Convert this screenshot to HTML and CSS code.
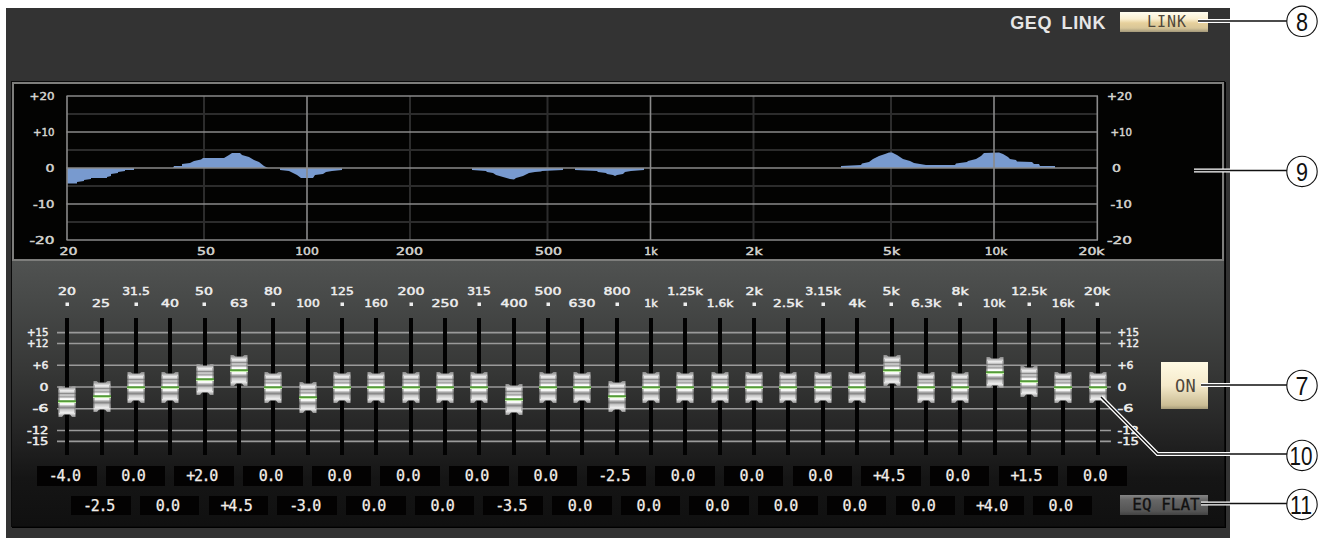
FILE: index.html
```
<!DOCTYPE html>
<html>
<head>
  <meta charset="utf-8">
  <meta name="viewport" content="width=device-width, initial-scale=1"/>
  <title>Graphic EQ</title>
  <link rel="stylesheet" href="styles.css">
</head>
<body>
  <main>
    <div class="panel">
      <header>
        <h1>GEQ LINK</h1>
        <button class="btn link">LINK</button>
      </header>
      <div class="eq">
        <div class="graph">
          <svg id="graph" viewBox="14 84 1208 175" width="1208" height="175"></svg>
        </div>
        <div class="bank">
          <svg id="scale" class="scale" viewBox="12 261 1140 200" width="1140" height="200"></svg>
          <div class="channels">
            <div id="faders" class="faders"></div>
            <div id="values_even" class="values"></div>
            <div id="values_odd" class="values odd"></div>
          </div>
          <div class="side">
            <button class="btn on">ON</button>
            <button class="btn flat">EQ FLAT</button>
          </div>
        </div>
      </div>
    </div>
    <svg class="callouts" viewBox="0 0 1329 545" width="1329" height="545">
      <defs>
        <linearGradient id="metal" x1="0" y1="0" x2="0" y2="1">
          <stop offset="0" stop-color="#8d8d8d"/>
          <stop offset=".06" stop-color="#a5a5a5"/>
          <stop offset=".15" stop-color="#efefef"/>
          <stop offset=".2" stop-color="#d5d5d5"/>
          <stop offset=".24" stop-color="#8a8a8a"/>
          <stop offset=".29" stop-color="#d8d8d8"/>
          <stop offset=".35" stop-color="#9c9c9c"/>
          <stop offset=".41" stop-color="#fff"/>
          <stop offset=".6" stop-color="#f6f6f6"/>
          <stop offset=".64" stop-color="#b5b5b5"/>
          <stop offset=".7" stop-color="#858585"/>
          <stop offset=".76" stop-color="#c8c8c8"/>
          <stop offset=".87" stop-color="#f0f0f0"/>
          <stop offset="1" stop-color="#8e8e8e"/>
        </linearGradient>
      </defs>
      <g class="halo">
        <path d="M1198 21H1230M1194 170.5H1230M1201 385H1230M1101 397L1157.5 454H1230M1201 503.5H1230"/>
      </g>
      <g class="leader">
        <path d="M1198 21H1287M1194 170.5H1287M1201 385H1287M1101 397L1157.5 454H1287M1201 503.5H1287"/>
      </g>
      <g class="number">
        <circle cx="1302" cy="21.3" r="15.2"/>
        <circle cx="1302" cy="171.4" r="15.2"/>
        <circle cx="1302" cy="385.4" r="15.2"/>
        <circle cx="1302" cy="455.4" r="15.2"/>
        <circle cx="1302" cy="504.4" r="15.2"/>
        <text x="1302" y="30.8" textLength="12" lengthAdjust="spacingAndGlyphs">8</text>
        <text x="1302" y="180.9" textLength="12" lengthAdjust="spacingAndGlyphs">9</text>
        <text x="1302" y="394.9" textLength="13" lengthAdjust="spacingAndGlyphs">7</text>
        <text x="1301" y="464.9" textLength="23" lengthAdjust="spacingAndGlyphs">10</text>
        <text x="1301" y="513.9" textLength="22" lengthAdjust="spacingAndGlyphs">11</text>
      </g>
    </svg>
  </main>
  <script src="geq.js"></script>
</body>
</html>
```
FILE: styles.css
```
html,
body {
  margin: 0;
  padding: 0;
  background: #fff;
}
main {
  position: relative;
  width: 1329px;
  height: 545px;
  overflow: hidden;
  font-family: "DejaVu Sans", sans-serif;
}
svg {
  display: block;
}
.panel {
  width: 1224px;
  height: 530px;
  margin: 8px 0 0 6px;
  background: #333;
  display: flex;
  flex-direction: column;
}
header {
  display: flex;
  justify-content: flex-end;
  align-items: flex-start;
  gap: 14px;
  height: 69px;
  padding: 4px 22px 0 0;
}
h1 {
  margin: 1px 0 0;
  font: bold 18px/20px "Liberation Sans", sans-serif;
  letter-spacing: .6px;
  word-spacing: 4px;
  color: #e6e6e6;
}

.btn {
  border: 0;
  padding: 0;
  font-family: "DejaVu Sans Mono", monospace;
  color: #4f473b;
}
.btn.link {
  width: 88px;
  height: 20px;
  padding-left: 6px;
  font-size: 15px;
  line-height: 20px;
  letter-spacing: 1px;
  background: linear-gradient(#fffdf0 0, #faefd0 35%, #e6d09c 55%, #d8c698 80%, #a3987a 100%);
}
.btn.on {
  width: 47px;
  height: 47px;
  margin: 101px 0 0 auto;
  padding-left: 2px;
  font-size: 17px;
  letter-spacing: .3px;
  background: linear-gradient(#fffae4, #f5eacb 50%, #cbbd95 92%, #a59a78);
}
.btn.flat {
  width: 88px;
  height: 20px;
  margin-top: 86px;
  padding-left: 4px;
  font-size: 16px;
  line-height: 20px;
  letter-spacing: 0;
  color: #111;
  -webkit-text-stroke: .3px #111;
  background: linear-gradient(#858585, #666 25%, #555 80%, #424242);
}

.eq {
  width: 1212px;
  height: 444px;
  margin-left: 5px;
  border: 1px solid #0a0a0a;
  box-shadow: 1px 1px 0 #000;
}
.graph {
  border: 2px solid #7e7e7c;
  background: #030302;
}
.bank {
  display: grid;
  grid-template-columns: 1108px 88px;
  height: 265px;
  background: linear-gradient(#505251 0, #474948 15%, #363736 42%, #242424 65%, #151515 82%, #101010);
}
.scale {
  grid-area: 1 / 1 / 2 / 3;
}
.channels {
  grid-area: 1 / 1 / 2 / 2;
}
.side {
  grid-area: 1 / 2 / 2 / 3;
  display: flex;
  flex-direction: column;
}

/* graph */
.dim {
  stroke: #2c2c2c;
  stroke-width: 2;
}
.grid {
  stroke: #8a8a8a;
  stroke-width: 1.6;
}
.curve {
  fill: #789acf;
}
.tick {
  fill: #d4d4d0;
  font-size: 10px;
  stroke: #d4d4d0;
  stroke-width: .45;
}
.end {
  text-anchor: end;
}
.mid {
  text-anchor: middle;
}
.scale .grid {
  stroke: #9a9a9a;
}
.bank .tick {
  fill: #eee;
  stroke: #eee;
}

/* faders */
.faders {
  display: grid;
  grid-template-columns: repeat(31, 34.355px);
  padding: 23px 0 0 38.1px;
}
.fader svg {
  overflow: visible;
}
.track {
  height: 137px;
  margin-top: 1px;
  display: flex;
  justify-content: center;
  align-items: flex-start;
  background: linear-gradient(#020202, #020202) center / 4px 100% no-repeat;
}
.cap {
  width: 18px;
  height: 31px;
}
.values {
  display: flex;
  gap: 9.2px;
  padding: 11px 0 0 25px;
}
.values.odd {
  padding: 10px 0 0 59.3px;
}
.value {
  flex: none;
  box-sizing: border-box;
  width: 59.5px;
  height: 19.5px;
  padding-right: 5px;
  background: #030202;
  color: #f3eee9;
  font: 15px/20px "DejaVu Sans Mono", monospace;
  letter-spacing: -1.3px;
  text-align: center;
  -webkit-text-stroke: .25px #f3eee9;
}

/* callouts lie over the panel */
.callouts {
  position: absolute;
  left: 0;
  top: 0;
}
.halo {
  fill: none;
  stroke: #fff;
  stroke-width: 4;
}
.leader {
  fill: none;
  stroke: #111;
  stroke-width: 1.4;
}
.number circle {
  fill: #fff;
  stroke: #111;
  stroke-width: 1.1;
}
.number text {
  font: 26px "Liberation Sans", sans-serif;
  fill: #111;
  text-anchor: middle;
}
```
FILE: geq.js
```
(function () {
  'use strict';
  var $ = document.querySelector.bind(document);

  var bands = [
    ['20', -4], ['25', -2.5], ['31.5', 0], ['40', 0], ['50', 2], ['63', 4.5],
    ['80', 0], ['100', -3], ['125', 0], ['160', 0], ['200', 0], ['250', 0],
    ['315', 0], ['400', -3.5], ['500', 0], ['630', 0], ['800', -2.5], ['1k', 0],
    ['1.25k', 0], ['1.6k', 0], ['2k', 0], ['2.5k', 0], ['3.15k', 0], ['4k', 0],
    ['5k', 4.5], ['6.3k', 0], ['8k', 0], ['10k', 4], ['12.5k', 1.5], ['16k', 0], ['20k', 0]
  ];
  var PX_PER_DB = 3.624;

  // wide lettering: the 1 and the point are narrower than the other glyphs
  var advance = { '1': 5.5, '.': 4, '+': 7, '-': 7, 'k': 8 };
  var label = function (x, y, text, cls) {
    var w = text.split('').reduce(function (sum, c) {
      return sum + (advance[c] || 9);
    }, 0);
    return `<text class="tick ${cls || ''}" x="${x}" y="${y + 3.6}" textLength="${w}" lengthAdjust="spacingAndGlyphs">${text}</text>`;
  };
  var line = function (cls, x1, y1, x2, y2) {
    return `<line class="${cls}" x1="${x1}" y1="${y1}" x2="${x2}" y2="${y2}"/>`;
  };

  // response graph
  var areas = [
    '67,168 67,183.5 77,183.5 77,182 84,181 84,180 91,179 91,178 107,178 107,177 111,176 111,174 118,173 118,172 125,171 125,170 134,170 134,168',
    '173,168 174,166 182,166 182,164 190,163 194,161 201,159.500 203,158 224,158 229,155 232,153 240,153 242,155 249,157 254,160 259,162 264,166 268,168',
    '280,168 280,170 289,171 293,173 297,175 301,178 313,178 315,175 323,174 326,172 332,171 342,170 342,168',
    '472,168 472,170 486,171 487,172 493,173 496,175 503,177 510,179 514,179.500 516,178 523,176 529,173 535,172 541,171.500 542,171 563,170 563,168',
    '575,168 575,170 597,171 598,172 606,173 607,174 613,175 615,176 617,175 623,174 625,172 631,171 644,170 644,168',
    '841,168 841,166 861,165 862,163.500 869,162 873,159 879,156 885,154 889,152.500 892,152.500 897,155 903,159 910,161 914,163 926,165 955,165 956,163.500 967,162 968,161 976,159 981,156 984,153 999,152.5 1003,154 1008,157 1010,159 1016,160 1017,161.5 1032,162 1034,164 1039,164 1040,166 1055,166 1055,168'
  ];
  var out = '';
  [114, 150, 186, 222].forEach(function (y) { out += line('dim', 67, y, 1097, y); });
  [204, 410, 547.5, 753.5, 891].forEach(function (x) { out += line('dim', x, 96, x, 240); });
  areas.forEach(function (points) { out += `<polygon class="curve" points="${points}"/>`; });
  [96, 132, 168, 204, 240].forEach(function (y) { out += line('grid', 66.5, y, 1098, y); });
  [67, 307, 650.5, 994, 1097.3].forEach(function (x) { out += line('grid', x, 96, x, 240); });
  ['+20', '+10', '0', '-10', '-20'].forEach(function (text, i) {
    out += label(54.5, 96 + i * 36, text, 'end');
    out += label(text === '0' ? 1121 : 1132, 96 + i * 36, text, 'end');
  });
  [[68.5, '20'], [206, '50'], [307, '100'], [409.5, '200'], [548.5, '500'], [651, '1k'],
    [754, '2k'], [891.5, '5k'], [996, '10k'], [1091.5, '20k']].forEach(function (mark) {
    out += label(mark[0], 251.5, mark[1], 'mid');
  });
  $('#graph').innerHTML = out;

  // dB lines behind the faders
  out = '';
  [15, 12, 6, 0, -6, -12, -15].forEach(function (db) {
    var y = 387 - db * PX_PER_DB;
    var text = (db > 0 ? '+' : '') + db;
    out += line('grid', 57, y, 1111, y) + label(48.5, y, text, 'end') + label(1117.5, y, text);
  });
  $('#scale').innerHTML = out;

  var cap = `<svg width="18" height="31" viewBox="0 0 18 31">
    <path fill="url(#metal)" d="M0.500 0H3.500L5.500 1.500H12.500L14.500 0H17.500V31H14L12 28.500H6L4 31H0.500Z"/>
    <path fill="#777" fill-opacity=".45" d="M0.500 4H2V27H0.500ZM16 4H17.500V27H16Z"/>
    <path fill="#549b39" d="M0 14.200H18V16H0Z"/>
    <path fill="#c3ecaa" d="M0 16H18V17H0Z"/>
  </svg>`;

  bands.forEach(function (band, i) {
    var odd = i % 2;
    var gain = band[1];
    var fader = document.createElement('div');
    fader.className = 'fader';
    fader.innerHTML = `<svg width="34" height="33">
        ${label(17, odd ? 19.5 : 7, band[0], 'mid')}
        ${odd ? '' : '<rect x="15.5" y="18.5" width="3.5" height="3.5" fill="#eee"/>'}
      </svg>
      <div class="track"><div class="cap" style="margin-top: ${(53.5 - gain * PX_PER_DB).toFixed(1)}px">${cap}</div></div>`;
    $('#faders').appendChild(fader);

    var value = document.createElement('div');
    value.className = 'value';
    value.textContent = (gain > 0 ? '+' : '') + gain.toFixed(1);
    $(odd ? '#values_odd' : '#values_even').appendChild(value);
  });
}());
```
